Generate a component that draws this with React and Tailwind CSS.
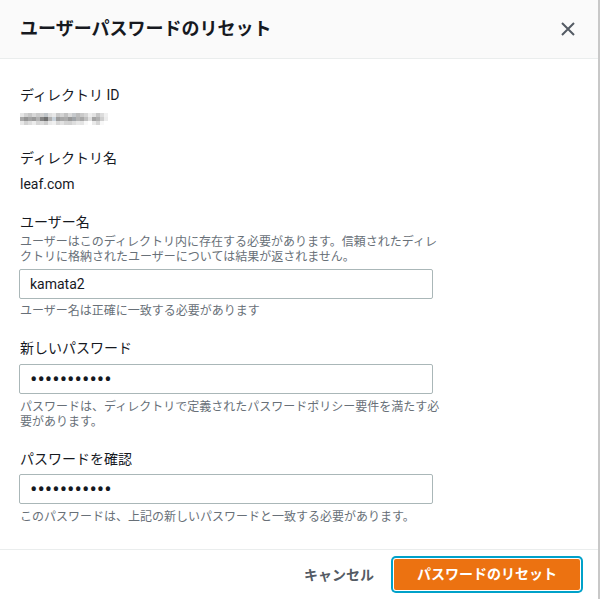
import React from 'react';

const FONT = { fontFamily: 'Roboto, "Noto Sans CJK JP", sans-serif' };

// pixelated (blurred) directory id
const blurRows = [
  ['#e6e6e6', '#d2d2d2', '#c6c6c6', '#d8d8d8', '#cacaca', '#d0d0d0', '#bfc4c8', '#dedede', '#e8e8e8', '#c8c8c8', '#d4d4d4', '#c2c2c2', '#dadada', '#c6c9cc', '#bcbcbc', '#cacaca', '#d6d6d6', '#eeeeee', '#e2e2e2', '#c6c6c6', '#dcdcdc', '#f0f0f0'],
  ['#a8a8a8', '#949494', '#a4a4a4', '#9a9a9a', '#b2b2b2', '#858585', '#707070', '#b0b0b0', '#c9d2da', '#9c9c9c', '#a8a8a8', '#acacac', '#989898', '#a0a4a8', '#b4b4b4', '#a8a8a8', '#c0c0c0', '#e0e0e0', '#a4a4a4', '#b0b0b0', '#cecece', '#ececec'],
  ['#e8e8e8', '#d2d2d2', '#dedede', '#ececec', '#d6d6d6', '#dcdcdc', '#cecece', '#eaeaea', '#f0f0f0', '#d8d8d8', '#e2e2e2', '#d4d4d4', '#d2d2d2', '#dedede', '#e8e8e8', '#e4e4e4', '#f8f8f8', '#ffffff', '#eaeaea', '#d6d6d6', '#f8f8f8', '#ffffff'],
];

const BlurredId = () => (
  <svg width="88" height="12" viewBox="0 0 88 12" className="block">
    {blurRows.map((row, r) =>
      row.map((c, i) => <rect key={`${r}-${i}`} x={i * 4} y={r * 4} width="4" height="4" fill={c} />)
    )}
  </svg>
);

const Field = ({ children }) => <div className="text-[14px] leading-[20px] text-[#16191f]">{children}</div>;

const Hint = ({ children, className = '' }) => (
  <div className={`w-[424px] text-[12px] leading-[15px] text-[#687078] ${className}`}>{children}</div>
);

const Input = ({ type = 'text', value, className = '' }) => (
  <input
    type={type}
    value={value}
    readOnly
    className={`block w-[414px] h-[30px] px-[10px] border border-[#aab7b8] rounded-[2px] bg-white text-[#16191f] outline-none ${className}`}
    style={FONT}
  />
);

export default function App() {
  return (
    <div className="w-[600px] h-[599px] bg-white overflow-hidden" style={FONT}>
      <div className="h-full border-r-2 border-[#c8c8c8] flex flex-col">
        {/* Header */}
        <div className="h-[59px] shrink-0 bg-[#fafafa] border-b border-[#eaeded] flex items-center justify-between pl-[20px] pr-[22px]">
          <h2 className="text-[18px] leading-[24px] font-bold text-[#16191f]">ユーザーパスワードのリセット</h2>
          <button className="text-[#545b64]">
            <svg width="16" height="16" viewBox="0 0 16 16" fill="none" stroke="currentColor" strokeWidth="2">
              <path d="M2 2l12 12M14 2L2 14" />
            </svg>
          </button>
        </div>

        {/* Body */}
        <div className="flex-1 pl-[20px] pt-[26px]">
          <Field>ディレクトリ ID</Field>
          <div className="mt-[8px]">
            <BlurredId />
          </div>

          <div className="mt-[23px]">
            <Field>ディレクトリ名</Field>
          </div>
          <div className="mt-[6px]">
            <Field>leaf.com</Field>
          </div>

          <div className="mt-[18px]">
            <Field>ユーザー名</Field>
          </div>
          <Hint className="mt-[3px]">
            ユーザーはこのディレクトリ内に存在する必要があります。信頼されたディレクトリに格納されたユーザーについては結果が返されません。
          </Hint>
          <div className="mt-[4px] -ml-[1px]">
            <Input value="kamata2" className="text-[14px]" />
          </div>
          <Hint className="mt-[5px]">ユーザー名は正確に一致する必要があります</Hint>

          <div className="mt-[19px]">
            <Field>新しいパスワード</Field>
          </div>
          <div className="mt-[6px] -ml-[1px]">
            <Input type="password" value="abcdefghijk" className="text-[22px]" />
          </div>
          <Hint className="mt-[6px]">
            パスワードは、ディレクトリで定義されたパスワードポリシー要件を満たす必要があります。
          </Hint>

          <div className="mt-[19px]">
            <Field>パスワードを確認</Field>
          </div>
          <div className="mt-[5px] -ml-[1px]">
            <Input type="password" value="abcdefghijk" className="text-[22px]" />
          </div>
          <Hint className="mt-[6px]">このパスワードは、上記の新しいパスワードと一致する必要があります。</Hint>
        </div>

        {/* Footer */}
        <div className="h-[50px] shrink-0 border-t border-[#eaeded] flex items-center justify-end pr-[18px] gap-[18px]">
          <button className="px-[2px] text-[14px] leading-[20px] font-bold text-[#545b64]">キャンセル</button>
          <button className="w-[186px] h-[31px] rounded-[2px] bg-[#ec7211] text-white text-[14px] font-bold ring-2 ring-[#00a1c9] ring-offset-1 ring-offset-white">
            パスワードのリセット
          </button>
        </div>
      </div>
    </div>
  );
}
